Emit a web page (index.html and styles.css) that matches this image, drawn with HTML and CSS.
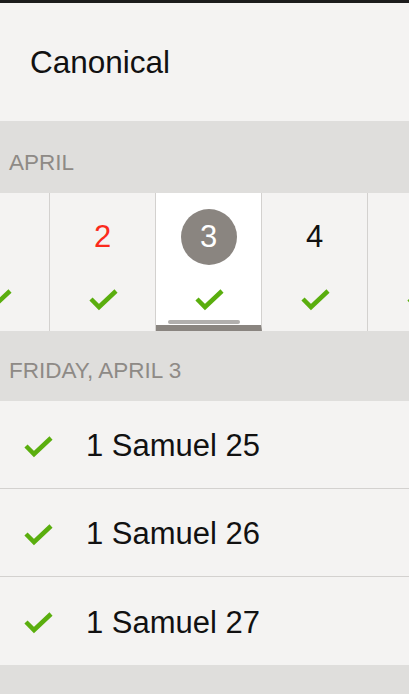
FILE: index.html
```html
<!DOCTYPE html>
<html lang="en">
<head>
<meta charset="UTF-8">
<meta name="viewport" content="width=device-width, initial-scale=1.0">
<title>Canonical</title>
<link rel="stylesheet" href="styles.css">
</head>
<body>

<div class="status-edge"></div>

<div class="plan-title">Canonical</div>

<div class="section-head">APRIL</div>

<div class="day-strip">
  <div class="day">
    <span class="day-num"></span>
    <svg class="check" viewBox="0 0 30 23"><polyline points="3,11 11,19 28,3"/></svg>
  </div>
  <div class="day">
    <span class="day-num sunday">2</span>
    <svg class="check" viewBox="0 0 30 23"><polyline points="3,11 11,19 28,3"/></svg>
  </div>
  <div class="day selected">
    <span class="day-num">3</span>
    <svg class="check" viewBox="0 0 30 23"><polyline points="3,11 11,19 28,3"/></svg>
    <div class="scroll-thumb"></div>
  </div>
  <div class="day">
    <span class="day-num">4</span>
    <svg class="check" viewBox="0 0 30 23"><polyline points="3,11 11,19 28,3"/></svg>
  </div>
  <div class="day">
    <span class="day-num"></span>
    <svg class="check" viewBox="0 0 30 23"><polyline points="3,11 11,19 28,3"/></svg>
  </div>
</div>

<div class="section-head day-head">FRIDAY, APRIL 3</div>

<div class="readings">
  <div class="reading">
    <svg class="check" viewBox="0 0 30 23"><polyline points="3,11 11,19 28,3"/></svg>
    <span>1 Samuel 25</span>
  </div>
  <div class="reading">
    <svg class="check" viewBox="0 0 30 23"><polyline points="3,11 11,19 28,3"/></svg>
    <span>1 Samuel 26</span>
  </div>
  <div class="reading">
    <svg class="check" viewBox="0 0 30 23"><polyline points="3,11 11,19 28,3"/></svg>
    <span>1 Samuel 27</span>
  </div>
</div>

<div class="footer-gap"></div>

</body>
</html>
```

FILE: styles.css
```css
/* Page */
body {
  margin: 0;
  background-color: #dfdedc;
  font-family: "Liberation Sans", Arial, sans-serif;
  color: #111;
  overflow: hidden;
}

.status-edge {
  height: 3px;
  background-color: #1c1c1c;
}

/* Plan title */
.plan-title {
  height: 118px;
  display: flex;
  align-items: center;
  padding-left: 30px;
  background-color: #f4f3f2;
  font-size: 31.5px;
}

/* Grey section headers */
.section-head {
  height: 72px;
  box-sizing: border-box;
  display: flex;
  align-items: flex-end;
  padding: 0 0 17px 9px;
  font-size: 22.5px;
  line-height: 26px;
  color: #8e8a86;
}

.section-head.day-head {
  height: 70px;
  padding-bottom: 17px;
}

/* Day strip */
.day-strip {
  display: flex;
  height: 138px;
  margin-left: -56px;
  overflow: hidden;
  background-color: #f4f3f2;
}

.day {
  position: relative;
  flex: 0 0 106px;
  border-right: 1px solid #d3d1cf;
  display: flex;
  flex-direction: column;
  align-items: center;
  padding-top: 16px;
  box-sizing: border-box;
}

.day-num {
  width: 56px;
  height: 56px;
  display: flex;
  align-items: center;
  justify-content: center;
  font-size: 31px;
  color: #111;
}

.day-num.sunday {
  color: #fb2a1c;
}

.day.selected {
  background-color: #fff;
  border-bottom: 6px solid #8a8580;
}

.day.selected .day-num {
  border-radius: 50%;
  background-color: #8a8580;
  color: #fff;
}

.day .check {
  margin-top: 23px;
}

.scroll-thumb {
  position: absolute;
  left: 12px;
  bottom: 1px;
  width: 72px;
  height: 4px;
  border-radius: 2px;
  background-color: #b1afad;
}

/* Check mark */
.check {
  width: 30px;
  height: 23px;
  flex: none;
}

.check polyline {
  fill: none;
  stroke: #5aae0e;
  stroke-width: 4.5;
  stroke-linecap: butt;
  stroke-linejoin: miter;
}

/* Readings list */
.readings {
  background-color: #f4f3f2;
}

.reading {
  height: 84px;
  display: flex;
  align-items: center;
  padding: 3px 0 0 23px;
  font-size: 31px;
  border-bottom: 1px solid #d3d1cf;
}

.reading:last-child {
  border-bottom: none;
  height: 85px;
}

.reading .check {
  margin-right: 33px;
}

.footer-gap {
  height: 40px;
}
```
